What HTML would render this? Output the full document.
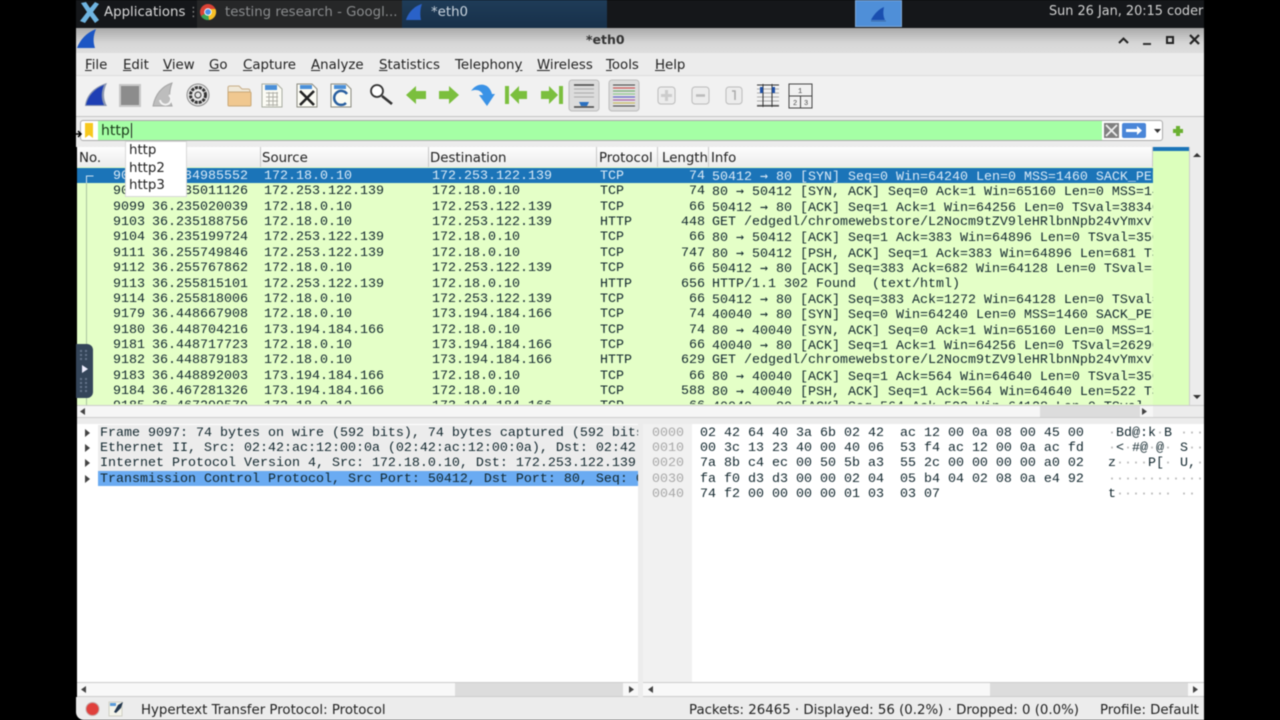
<!DOCTYPE html>
<html><head><meta charset="utf-8"><style>
html,body{margin:0;padding:0;background:#000;width:1280px;height:720px;overflow:hidden}
#p{position:relative;width:1280px;height:720px;overflow:hidden;filter:blur(0.45px);font-family:"DejaVu Sans",sans-serif;font-size:13.33px;color:#222}
.a{position:absolute}
.t{position:absolute;white-space:pre}
u{text-decoration:underline;text-underline-offset:1px}
.mn{top:58px;font-size:13.33px;line-height:16px}
.m{font-family:"Liberation Mono",monospace;font-size:13.33px;line-height:15px;white-space:pre;position:absolute;color:#12272e}
.m i{font-style:normal;color:#b4b4b4}
.r{position:absolute;left:77px;width:1076px;height:15.36px;overflow:hidden;background:#e4ffc7}
.r span{position:absolute;top:1.4px;font-family:"Liberation Mono",monospace;font-size:13.33px;line-height:15.36px;white-space:pre;color:#12272e}
.r b{font-weight:normal;font-family:"DejaVu Sans Mono",monospace;font-size:13.28px}
.n{left:0;width:68px;text-align:right}.ti{left:75px}.s{left:187px}.d{left:355px}.pr{left:523px}.l{left:590px;width:38px;text-align:right}.i{left:635px}
.sel{background:#1b74b8}.sel span{color:#d9e9f6}
.h{position:absolute;top:147px;height:20px;background:linear-gradient(#fdfdfd,#ececec);border-right:1px solid #c8c8c8;font-size:13.33px;line-height:20px;padding-left:3px;box-sizing:border-box;color:#222}
.h em{font-style:normal;position:relative;top:0}
svg{position:absolute;overflow:visible}
</style></head><body><div id="p">
<!-- taskbar -->
<div class="a" style="left:76px;top:0;width:1128px;height:28px;background:#15171a"></div>
<div class="a" style="left:197px;top:0;width:205px;height:28px;background:#262728"></div>
<div class="a" style="left:402px;top:0;width:205px;height:28px;background:linear-gradient(#1f3c58,#17304a)"></div>
<div class="a" style="left:855px;top:0;width:47px;height:27px;background:#4f8fd8;border:1px solid #7fa9d8;box-sizing:border-box"></div>
<svg style="left:78px;top:0" width="24" height="24"><path d="M3 3L8 2L12 8L17 2L21 4L15 12L21 20L17 23L12 16L7 23L2 21L9 12Z" fill="#6fb4e0"/></svg>
<div class="t" style="left:104px;top:5px;font-size:13.33px;line-height:16px;color:#d8d8d8">Applications</div>
<div class="t" style="left:187px;top:5px;font-size:13px;line-height:16px;color:#888">⋮</div>
<svg style="left:199px;top:3px" width="18" height="18" viewBox="0 0 18 18"><circle cx="9" cy="9" r="8" fill="#d94236"/><path d="M9 9L2 13A8 8 0 0 0 10 17Z" fill="#3ba556"/><path d="M9 9L10 17A8 8 0 0 0 16.5 6H9Z" fill="#f6c026"/><circle cx="9" cy="9" r="3.8" fill="#fff"/><circle cx="9" cy="9" r="2.9" fill="#4a8fe6"/></svg>
<div class="t" style="left:225px;top:5px;font-size:13.3px;line-height:16px;color:#8a8c8e">testing research - Googl...</div>
<svg style="left:405px;top:3px" width="18" height="18"><path d="M1 17C3 10 9 3 17 1C15 6 15 12 16 17Z" fill="#2a62c8"/></svg>
<div class="t" style="left:431px;top:5px;font-size:13.33px;line-height:16px;color:#c9d4de">*eth0</div>
<svg style="left:869px;top:5px" width="20" height="18"><path d="M2 15C5 9 10 4 15 2C14 7 14 11 16 15Z" fill="#1a4fb0"/><path d="M2 16H17" stroke="#3a6aa8"/></svg>
<div class="t" style="left:1049px;top:4px;font-size:12.85px;line-height:16px;color:#d0d0d0">Sun 26 Jan, 20:15 coder</div>
<!-- title -->
<div class="a" style="left:76px;top:28px;width:1128px;height:25px;background:linear-gradient(#a9a9a9,#d6d6d6 60%,#dedede)"></div>
<svg style="left:76px;top:28px" width="24" height="24"><path d="M1 20C4 12 10 5 20 1C17 8 17 14 19 20Z" fill="#1c56c4"/></svg>
<div class="t" style="left:586px;top:32px;font-size:12.5px;font-weight:bold;color:#333">*eth0</div>
<svg style="left:1116px;top:32px" width="84" height="16"><path d="M3 11L7.500 6.500L12 11" fill="none" stroke="#222" stroke-width="2"/><path d="M27 12H35" stroke="#333" stroke-width="2"/><rect x="51" y="5" width="6" height="6" fill="none" stroke="#222" stroke-width="2"/><path d="M74 3L83 12M83 3L74 12" stroke="#222" stroke-width="2.200"/></svg>
<!-- menu -->
<div class="a" style="left:76px;top:53px;width:1128px;height:22px;background:#ececec"></div>
<div class="t mn" style="left:85px"><u>F</u>ile</div>
<div class="t mn" style="left:123px"><u>E</u>dit</div>
<div class="t mn" style="left:163px"><u>V</u>iew</div>
<div class="t mn" style="left:209px"><u>G</u>o</div>
<div class="t mn" style="left:243px"><u>C</u>apture</div>
<div class="t mn" style="left:311px"><u>A</u>nalyze</div>
<div class="t mn" style="left:379px"><u>S</u>tatistics</div>
<div class="t mn" style="left:455px">Telephon<u>y</u></div>
<div class="t mn" style="left:537px"><u>W</u>ireless</div>
<div class="t mn" style="left:606px"><u>T</u>ools</div>
<div class="t mn" style="left:655px"><u>H</u>elp</div>
<!-- toolbar -->
<div class="a" style="left:76px;top:75px;width:1128px;height:41px;background:#f1f1f1;border-top:1px solid #dcdcdc;box-sizing:border-box"></div>
<div class="a" style="left:76px;top:116px;width:1128px;height:31px;background:#ececec;border-top:1px solid #c4c4c4;box-sizing:border-box"></div>
<svg style="left:76px;top:76px" width="780" height="40">
<!-- shark -->
<path d="M9 30C10 20 17 11 31 7C27 15 27 23 31 30Z" fill="#8a96b0"/><path d="M10 29C12 20 18 13 28 9C25 16 25 23 28 29Z" fill="#1e3fb4"/>
<!-- stop -->
<rect x="44" y="9" width="20" height="21" fill="#8c8c8c" stroke="#c8c8c8" stroke-width="2"/>
<!-- restart -->
<path d="M77 30C79 20 84 11 96 7C93 15 93 23 96 30Z" fill="#bdbdbd" stroke="#a4a4a4"/><path d="M93 19A5.500 5.500 0 1 1 84 24" fill="none" stroke="#f4f4f4" stroke-width="2"/>
<!-- gear -->
<circle cx="122" cy="19" r="11" fill="#e8e8e8" stroke="#888"/><circle cx="122" cy="19" r="7.500" fill="none" stroke="#333" stroke-width="3" stroke-dasharray="3 1"/><circle cx="122" cy="19" r="3" fill="#e8e8e8" stroke="#333"/>
<!-- folder -->
<path d="M152 16V11.500Q152 10 154 10H163L166 13H172Q174 13 174 15V17Z" fill="#efe8d8" stroke="#c8ae88"/><rect x="152" y="16" width="23" height="14" rx="1" fill="#f0c890" stroke="#c8a878"/>
<!-- docs -->
<path d="M186 8H201L206 13V31H186Z" fill="#fbfbf4" stroke="#a8aca0"/><path d="M189 9H201V14H189Z" fill="#4a8fd8"/><path d="M190 17H202M190 21H202M190 25H202M190 29H202M193 16V30M197 16V30M201 16V30" stroke="#b0b0a8"/>
<path d="M221 8H236L241 13V31H221Z" fill="#fbfbf4" stroke="#8a8a80"/><path d="M224 9H236V13H224Z" fill="#4a8fd8"/><path d="M224 15L238 29M238 15L224 29" stroke="#222" stroke-width="2.600"/>
<path d="M255 8H270L275 13V31H255Z" fill="#fbfbf4" stroke="#8a8a80"/><path d="M258 9H270V13H258Z" fill="#4a8fd8"/><path d="M271 18A7 7 0 1 0 270 27" fill="none" stroke="#2a60a0" stroke-width="2.500"/>
<!-- search -->
<circle cx="301" cy="15" r="6" fill="#fff" stroke="#333" stroke-width="1.800"/><path d="M306 20L316 28" stroke="#333" stroke-width="2.600"/>
<!-- arrows -->
<path d="M330 19L340 10V15H350V23H340V28Z" fill="#7bbf3e"/>
<path d="M383 19L373 10V15H363V23H373V28Z" fill="#7bbf3e"/>
<path d="M395 15C401 6 413 6 416 18H419L411 30L403 19H407C405 14 400 13 395 15Z" fill="#3a92e6"/>
<path d="M429 10H433V28H429ZM434 19L443 10V15H451V23H443V28Z" fill="#7bbf3e"/>
<path d="M483 10H487V28H483ZM482 19L473 10V15H465V23H473V28Z" fill="#7bbf3e"/>
<!-- autoscroll -->
<rect x="493" y="4" width="30" height="31" rx="3" fill="#dcdcdc" stroke="#bcbcbc"/><path d="M498 9H518" stroke="#444" stroke-width="1.400"/><path d="M498 13H518M498 17H518M498 21H518" stroke="#aaa"/><path d="M498 31H518" stroke="#444" stroke-width="1.400"/><path d="M503 26H513L511 30H505Z" fill="#2a70c0"/>
<!-- colorize -->
<rect x="533" y="4" width="30" height="31" rx="3" fill="#dcdcdc" stroke="#bcbcbc"/><path d="M537 9H559" stroke="#444"/><path d="M537 12H559" stroke="#c44"/><path d="M537 15H559" stroke="#6a6"/><path d="M537 18H559" stroke="#8c8"/><path d="M537 21H559" stroke="#55c"/><path d="M537 24H559" stroke="#a5a"/><path d="M537 27H559" stroke="#cb5"/><path d="M537 30H559" stroke="#444"/>
<!-- zoom -->
<rect x="582" y="11" width="17" height="17" rx="3" fill="#ececec" stroke="#bbb"/><path d="M590.500 14V25M585 19.500H596" stroke="#ccc" stroke-width="3"/>
<rect x="616" y="11" width="17" height="17" rx="3" fill="#ececec" stroke="#bbb"/><path d="M620 19.500H629" stroke="#bbb" stroke-width="2.500"/>
<rect x="650" y="11" width="16" height="17" rx="3" fill="#ececec" stroke="#bbb"/><path d="M656 15H659V24" fill="none" stroke="#aaa" stroke-width="1.500"/>
<path d="M681 9H703M681 13H703M681 17H703M681 21H703M681 25H703M681 29H703" stroke="#aaa"/><path d="M681 9H703M681 30H703M687 8V31M696 8V31" stroke="#333"/><rect x="684" y="11" width="3" height="6" fill="#1e50a8"/><rect x="696" y="11" width="3" height="6" fill="#1e50a8"/>
<rect x="713" y="8" width="23" height="24" fill="none" stroke="#444"/><path d="M713 20H736M724.500 20V32" stroke="#444"/>
<text x="722" y="17" font-family="Liberation Mono" font-size="7" fill="#444">1</text><text x="717" y="29" font-family="Liberation Mono" font-size="7" fill="#444">2</text><text x="728" y="29" font-family="Liberation Mono" font-size="7" fill="#444">3</text>
</svg>
<!-- filter -->
<div class="a" style="left:80px;top:120px;width:1083px;height:21px;background:#fff;border:1px solid #aaa;border-radius:3px;box-sizing:border-box"></div>
<div class="a" style="left:98px;top:121px;width:1004px;height:19px;background:#a5ffa5"></div>
<svg style="left:84px;top:122px" width="12" height="17"><path d="M1 1H9V16L5 13L1 16Z" fill="#f7c81e"/></svg>
<svg style="left:74px;top:128px" width="10" height="12"><path d="M0 6H7M4 3L7 6L4 9" fill="none" stroke="#000" stroke-width="1.500"/></svg>
<div class="t" style="left:101px;top:123px;font-size:14px;color:#1a3a1a">http</div>
<div class="a" style="left:131px;top:123px;width:1px;height:15px;background:#222"></div>
<svg style="left:1103px;top:122px" width="90" height="18"><rect x="1" y="1" width="15" height="15" fill="#808080"/><path d="M3 3L14 14M14 3L3 14" stroke="#eee" stroke-width="1.800"/><rect x="19" y="1" width="24" height="15" rx="2" fill="#4a86d8"/><path d="M23 7H34V4L39 8.500L34 13V10H23Z" fill="#fff"/><path d="M51 7H58L54.500 11Z" fill="#333"/><path d="M75 4V14M70 9H80" stroke="#6ab030" stroke-width="4"/></svg>
<!-- header -->
<div class="h" style="left:77px;width:75px;padding-left:2px"><em style="top:2px">No.</em></div>
<div class="h" style="left:152px;width:109px"></div>
<div class="h" style="left:261px;width:168px;padding-left:1px"><em style="top:2px">Source</em></div>
<div class="h" style="left:429px;width:168px;padding-left:1px"><em style="top:2px">Destination</em></div>
<div class="h" style="left:597px;width:61px;padding-left:2px"><em style="top:2px">Protocol</em></div>
<div class="h" style="left:658px;width:51px;padding-left:4px"><em style="top:2px">Length</em></div>
<div class="h" style="left:709px;width:444px;padding-left:2px"><em style="top:2px">Info</em></div>
<div class="a" style="left:1153px;top:147px;width:36px;height:258px;background:#dcffbc"></div>
<div class="a" style="left:1153px;top:147px;width:36px;height:4px;background:#1b74b8"></div>
<div class="a" style="left:1189px;top:147px;width:15px;height:258px;background:#ececec;border-left:1px solid #ccc;box-sizing:border-box"></div>
<svg style="left:1190px;top:150px" width="14" height="255"><path d="M3 7L7 3L11 7Z" fill="#333"/><path d="M3 245L7 249L11 245Z" fill="#333"/></svg>
<!-- rows -->
<div class="a" style="left:77px;top:167px;width:1076px;height:238px;background:#e4ffc7"></div>
<div class="r sel" style="top:167.500px"><span class="n">9097</span><span class="ti">36.234985552</span><span class="s">172.18.0.10</span><span class="d">172.253.122.139</span><span class="pr">TCP</span><span class="l">74</span><span class="i">50412 <b>→</b> 80 [SYN] Seq=0 Win=64240 Len=0 MSS=1460 SACK_PERM</span></div>
<div class="r" style="top:182.860px"><span class="n">9098</span><span class="ti">36.235011126</span><span class="s">172.253.122.139</span><span class="d">172.18.0.10</span><span class="pr">TCP</span><span class="l">74</span><span class="i">80 <b>→</b> 50412 [SYN, ACK] Seq=0 Ack=1 Win=65160 Len=0 MSS=1460</span></div>
<div class="r" style="top:198.220px"><span class="n">9099</span><span class="ti">36.235020039</span><span class="s">172.18.0.10</span><span class="d">172.253.122.139</span><span class="pr">TCP</span><span class="l">66</span><span class="i">50412 <b>→</b> 80 [ACK] Seq=1 Ack=1 Win=64256 Len=0 TSval=38340</span></div>
<div class="r" style="top:213.580px"><span class="n">9103</span><span class="ti">36.235188756</span><span class="s">172.18.0.10</span><span class="d">172.253.122.139</span><span class="pr">HTTP</span><span class="l">448</span><span class="i">GET /edgedl/chromewebstore/L2Nocm9tZV9leHRlbnNpb24vYmxvYg</span></div>
<div class="r" style="top:229.100px"><span class="n">9104</span><span class="ti">36.235199724</span><span class="s">172.253.122.139</span><span class="d">172.18.0.10</span><span class="pr">TCP</span><span class="l">66</span><span class="i">80 <b>→</b> 50412 [ACK] Seq=1 Ack=383 Win=64896 Len=0 TSval=3500</span></div>
<div class="r" style="top:244.300px"><span class="n">9111</span><span class="ti">36.255749846</span><span class="s">172.253.122.139</span><span class="d">172.18.0.10</span><span class="pr">TCP</span><span class="l">747</span><span class="i">80 <b>→</b> 50412 [PSH, ACK] Seq=1 Ack=383 Win=64896 Len=681 TSv</span></div>
<div class="r" style="top:259.660px"><span class="n">9112</span><span class="ti">36.255767862</span><span class="s">172.18.0.10</span><span class="d">172.253.122.139</span><span class="pr">TCP</span><span class="l">66</span><span class="i">50412 <b>→</b> 80 [ACK] Seq=383 Ack=682 Win=64128 Len=0 TSval=38</span></div>
<div class="r" style="top:275.200px"><span class="n">9113</span><span class="ti">36.255815101</span><span class="s">172.253.122.139</span><span class="d">172.18.0.10</span><span class="pr">HTTP</span><span class="l">656</span><span class="i">HTTP/1.1 302 Found  (text/html)</span></div>
<div class="r" style="top:290.380px"><span class="n">9114</span><span class="ti">36.255818006</span><span class="s">172.18.0.10</span><span class="d">172.253.122.139</span><span class="pr">TCP</span><span class="l">66</span><span class="i">50412 <b>→</b> 80 [ACK] Seq=383 Ack=1272 Win=64128 Len=0 TSval=3</span></div>
<div class="r" style="top:305.740px"><span class="n">9179</span><span class="ti">36.448667908</span><span class="s">172.18.0.10</span><span class="d">173.194.184.166</span><span class="pr">TCP</span><span class="l">74</span><span class="i">40040 <b>→</b> 80 [SYN] Seq=0 Win=64240 Len=0 MSS=1460 SACK_PERM</span></div>
<div class="r" style="top:321.300px"><span class="n">9180</span><span class="ti">36.448704216</span><span class="s">173.194.184.166</span><span class="d">172.18.0.10</span><span class="pr">TCP</span><span class="l">74</span><span class="i">80 <b>→</b> 40040 [SYN, ACK] Seq=0 Ack=1 Win=65160 Len=0 MSS=1460</span></div>
<div class="r" style="top:336.460px"><span class="n">9181</span><span class="ti">36.448717723</span><span class="s">172.18.0.10</span><span class="d">173.194.184.166</span><span class="pr">TCP</span><span class="l">66</span><span class="i">40040 <b>→</b> 80 [ACK] Seq=1 Ack=1 Win=64256 Len=0 TSval=26290</span></div>
<div class="r" style="top:351.820px"><span class="n">9182</span><span class="ti">36.448879183</span><span class="s">172.18.0.10</span><span class="d">173.194.184.166</span><span class="pr">HTTP</span><span class="l">629</span><span class="i">GET /edgedl/chromewebstore/L2Nocm9tZV9leHRlbnNpb24vYmxvYg</span></div>
<div class="r" style="top:367.180px"><span class="n">9183</span><span class="ti">36.448892003</span><span class="s">173.194.184.166</span><span class="d">172.18.0.10</span><span class="pr">TCP</span><span class="l">66</span><span class="i">80 <b>→</b> 40040 [ACK] Seq=1 Ack=564 Win=64640 Len=0 TSval=3500</span></div>
<div class="r" style="top:382.540px"><span class="n">9184</span><span class="ti">36.467281326</span><span class="s">173.194.184.166</span><span class="d">172.18.0.10</span><span class="pr">TCP</span><span class="l">588</span><span class="i">80 <b>→</b> 40040 [PSH, ACK] Seq=1 Ack=564 Win=64640 Len=522 TSv</span></div>
<div class="r" style="top:397.900px;height:6px"><span class="n">9185</span><span class="ti">36.467299579</span><span class="s">172.18.0.10</span><span class="d">173.194.184.166</span><span class="pr">TCP</span><span class="l">66</span><span class="i">40040 <b>→</b> 80 [ACK] Seq=564 Ack=523 Win=64128 Len=0 TSval=26</span></div>
<svg style="left:84px;top:167px" width="12" height="238"><path d="M9.500 9H2.500V16" fill="none" stroke="#cfe3f2"/><path d="M2.500 16V238" stroke="#a9c4a0"/></svg>
<!-- autocomplete popup -->
<div class="a" style="left:125px;top:141px;width:62px;height:56px;background:#fff;border:1px solid #d8d8d8;box-sizing:border-box"></div>
<div class="t" style="left:129px;top:143px;font-size:13.33px;color:#222">http</div>
<div class="t" style="left:129px;top:161px;font-size:13.33px;color:#222">http2</div>
<div class="t" style="left:129px;top:178px;font-size:13.33px;color:#222">http3</div>
<!-- side handle -->
<div class="a" style="left:76px;top:344px;width:17px;height:54px;background:#344559;border-radius:0 6px 6px 0"></div>
<svg style="left:78px;top:348px" width="12" height="46"><path d="M3 2V12M8 2V12M3 30V44M8 30V44" stroke="#64748a" stroke-width="2" stroke-dasharray="2 2"/><path d="M4 17L10 21L4 25Z" fill="#eef"/></svg>
<!-- hscroll top -->
<div class="a" style="left:77px;top:405px;width:1127px;height:13px;background:#f6f6f6;border-top:1px solid #ccc;border-bottom:1px solid #ccc;box-sizing:border-box"></div>
<div class="a" style="left:1040px;top:406px;width:100px;height:11px;background:#dcdcdc"></div>
<div class="a" style="left:1153px;top:406px;width:51px;height:11px;background:#ececec"></div>
<svg style="left:78px;top:406px" width="1090" height="12"><path d="M7 2V9L2 5.500Z" fill="#444"/><path d="M1064 2V9L1069 5.500Z" fill="#444"/></svg>
<div class="a" style="left:77px;top:418px;width:1127px;height:6px;background:#ececec"></div>
<!-- detail panes -->
<div class="a" style="left:77px;top:424px;width:561px;height:259px;background:#fff"></div>
<div class="a" style="left:638px;top:424px;width:5px;height:273px;background:#ececec"></div>
<div class="a" style="left:643px;top:424px;width:561px;height:259px;background:#fff"></div>
<div class="a" style="left:643px;top:424px;width:49px;height:259px;background:#f1f1f1"></div>
<div class="a" style="left:98px;top:425px;width:540px;height:46px;background:#ececec"></div>
<div class="a" style="left:98px;top:471px;width:540px;height:15px;background:#6aabf2"></div>
<svg style="left:83px;top:427px" width="10" height="60"><path d="M2 2L7 6L2 10Z M2 17L7 21L2 25Z M2 32L7 36L2 40Z M2 48L7 52L2 56Z" fill="#444"/></svg>
<div style="position:absolute;left:100px;top:425px;width:538px;height:61px;overflow:hidden">
<div class="m" style="left:0;top:0.500px">Frame 9097: 74 bytes on wire (592 bits), 74 bytes captured (592 bits)</div>
<div class="m" style="left:0;top:15.500px">Ethernet II, Src: 02:42:ac:12:00:0a (02:42:ac:12:00:0a), Dst: 02:42:64</div>
<div class="m" style="left:0;top:31px">Internet Protocol Version 4, Src: 172.18.0.10, Dst: 172.253.122.139</div>
<div class="m" style="left:0;top:46.500px">Transmission Control Protocol, Src Port: 50412, Dst Port: 80, Seq: 0</div>
</div>
<div class="m" style="left:652px;top:425.500px;line-height:15.400px;color:#a8a8a8">0000
0010
0020
0030
0040</div>
<div class="m" style="left:700px;top:425.500px;line-height:15.400px">02 42 64 40 3a 6b 02 42  ac 12 00 0a 08 00 45 00
00 3c 13 23 40 00 40 06  53 f4 ac 12 00 0a ac fd
7a 8b c4 ec 00 50 5b a3  55 2c 00 00 00 00 a0 02
fa f0 d3 d3 00 00 02 04  05 b4 04 02 08 0a e4 92
74 f2 00 00 00 00 01 03  03 07</div>
<div class="m" style="left:1108px;top:425.500px;line-height:15.400px;width:96px;overflow:hidden"><i>·</i>Bd@:k<i>·</i>B <i>···</i>
<i>·</i>&lt;<i>·</i>#@<i>·</i>@<i>·</i> S<i>··</i>
z<i>····</i>P[<i>·</i> U,<i>·</i>
<i>············</i>
t<i>······· ··</i></div>
<!-- bottom hscrolls -->
<div class="a" style="left:77px;top:682px;width:561px;height:15px;background:#f8f8f8;border-top:1px solid #ccc;border-bottom:1px solid #ccc;box-sizing:border-box"></div>
<div class="a" style="left:455px;top:683px;width:168px;height:13px;background:#dcdcdc"></div>
<div class="a" style="left:643px;top:682px;width:561px;height:15px;background:#f8f8f8;border-top:1px solid #ccc;border-bottom:1px solid #ccc;box-sizing:border-box"></div>
<div class="a" style="left:990px;top:683px;width:198px;height:13px;background:#dcdcdc"></div>
<svg style="left:80px;top:684px" width="1120" height="12"><path d="M6 2V9L1 5.500Z" fill="#444"/><path d="M549 2V9L554 5.500Z" fill="#444"/><path d="M573 2V9L568 5.500Z" fill="#444"/><path d="M1113 2V9L1118 5.500Z" fill="#444"/></svg>
<!-- status -->
<div class="a" style="left:76px;top:697px;width:1128px;height:23px;background:#ececec;border-bottom-left-radius:8px"></div>
<svg style="left:85px;top:700px" width="40" height="18"><circle cx="7.500" cy="9" r="6.500" fill="#e0403c" stroke="#c4a8a8"/><path d="M24 2H37V16H24Z" fill="#f4f4ea" stroke="#cfcfc4"/><path d="M25 3H31V6H25Z" fill="#5a9ad8"/><path d="M38 2L33 5L29 12L31 13L36 8Z" fill="#22374f"/></svg>
<div class="t" style="left:141px;top:703px;font-size:13.33px;color:#222">Hypertext Transfer Protocol: Protocol</div>
<div class="t" style="left:689px;top:703px;font-size:13.33px;color:#222">Packets: 26465 · Displayed: 56 (0.2%) · Dropped: 0 (0.0%)</div>
<div class="t" style="left:1100px;top:703px;font-size:13.33px;color:#222">Profile: Default</div>
<div class="a" style="left:1204px;top:0;width:76px;height:720px;background:#000"></div>
<div class="a" style="left:0;top:0;width:76px;height:720px;background:#000"></div>
</div></body></html>
